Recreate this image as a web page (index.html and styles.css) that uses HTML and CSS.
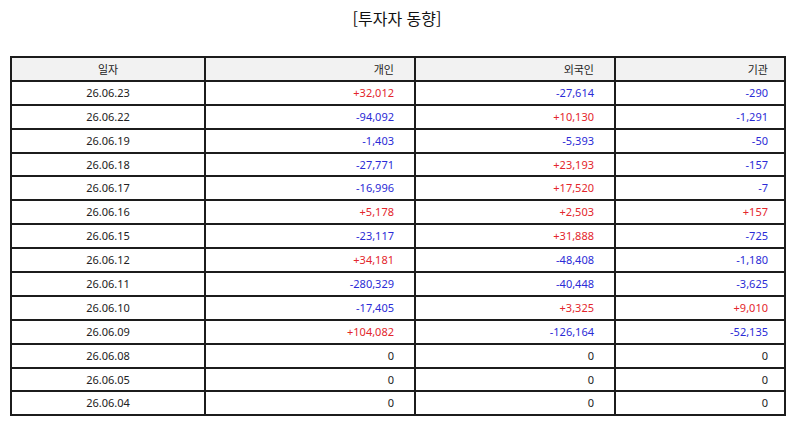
FILE: index.html
```html
<!DOCTYPE html>
<html lang="ko">
<head>
<meta charset="utf-8">
<title>투자자 동향</title>
<link rel="stylesheet" href="styles.css">
</head>
<body>
<h1 class="title">[투자자 동향]</h1>
<table class="grid">
  <colgroup>
    <col class="c-date"><col class="c-ind"><col class="c-for"><col class="c-inst">
  </colgroup>
  <thead>
    <tr><th class="date">일자</th><th>개인</th><th>외국인</th><th class="last">기관</th></tr>
  </thead>
  <tbody>
    <tr><td class="date">26.06.23</td><td class="up">+32,012</td><td class="down">-27,614</td><td class="down last">-290</td></tr>
    <tr><td class="date">26.06.22</td><td class="down">-94,092</td><td class="up">+10,130</td><td class="down last">-1,291</td></tr>
    <tr><td class="date">26.06.19</td><td class="down">-1,403</td><td class="down">-5,393</td><td class="down last">-50</td></tr>
    <tr><td class="date">26.06.18</td><td class="down">-27,771</td><td class="up">+23,193</td><td class="down last">-157</td></tr>
    <tr><td class="date">26.06.17</td><td class="down">-16,996</td><td class="up">+17,520</td><td class="down last">-7</td></tr>
    <tr><td class="date">26.06.16</td><td class="up">+5,178</td><td class="up">+2,503</td><td class="up last">+157</td></tr>
    <tr><td class="date">26.06.15</td><td class="down">-23,117</td><td class="up">+31,888</td><td class="down last">-725</td></tr>
    <tr><td class="date">26.06.12</td><td class="up">+34,181</td><td class="down">-48,408</td><td class="down last">-1,180</td></tr>
    <tr><td class="date">26.06.11</td><td class="down">-280,329</td><td class="down">-40,448</td><td class="down last">-3,625</td></tr>
    <tr><td class="date">26.06.10</td><td class="down">-17,405</td><td class="up">+3,325</td><td class="up last">+9,010</td></tr>
    <tr><td class="date">26.06.09</td><td class="up">+104,082</td><td class="down">-126,164</td><td class="down last">-52,135</td></tr>
    <tr><td class="date">26.06.08</td><td>0</td><td>0</td><td class="last">0</td></tr>
    <tr><td class="date">26.06.05</td><td>0</td><td>0</td><td class="last">0</td></tr>
    <tr><td class="date">26.06.04</td><td>0</td><td>0</td><td class="last">0</td></tr>
  </tbody>
</table>
</body>
</html>
```

FILE: styles.css
```css
html, body {
  margin: 0;
  padding: 0;
  background: #ffffff;
}

body {
  font-family: "Noto Sans", "Noto Sans CJK KR", sans-serif;
  color: #222222;
}

.title {
  margin: 6px 0 0 0;
  height: 50px;
  text-align: center;
  font-size: 16px;
  font-weight: 400;
  line-height: 24px;
  color: #111111;
  font-family: "Noto Sans CJK KR", sans-serif;
}

.grid {
  margin-left: 10px;
  width: 774px;
  border-collapse: collapse;
  table-layout: fixed;
  font-size: 11px;
}

.c-date { width: 194px; }
.c-ind { width: 210px; }
.c-for { width: 200px; }
.c-inst { width: 170px; }

.grid th,
.grid td {
  border: 2px solid #1c1c1c;
  height: 23.9px;
  padding: 0 20px 0 4px;
  box-sizing: border-box;
  text-align: right;
  font-weight: 400;
  line-height: 14px;
  white-space: nowrap;
}

.grid th {
  background: #f2f2f2;
  font-family: "Noto Sans CJK KR", sans-serif;
  color: #222222;
}

.grid .date {
  text-align: center;
  padding: 0 4px;
}

.grid .last {
  padding-right: 16px;
}

.up { color: #e3262c; }
.down { color: #2b2bd6; }
```
